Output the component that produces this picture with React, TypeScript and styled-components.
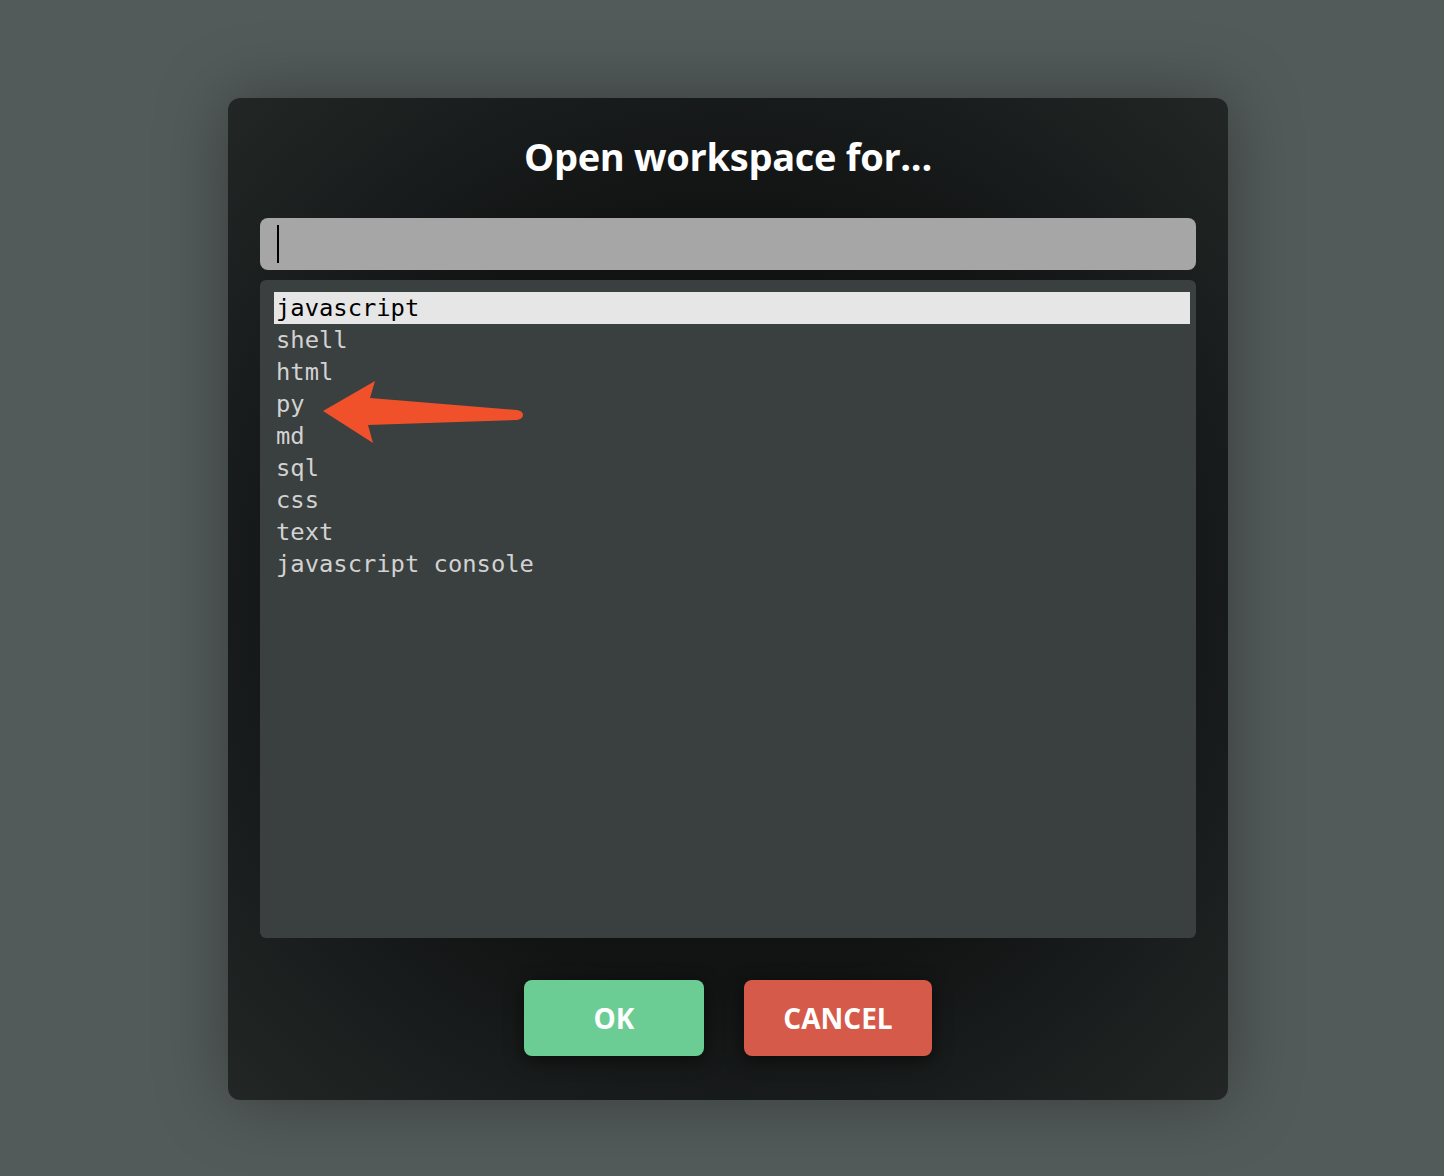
import React from 'react';
import styled, { createGlobalStyle } from 'styled-components';

const GlobalStyle = createGlobalStyle`
    html, body {
        margin: 0;
        padding: 0;
        background: #535b5a;
    }
`;

const Page = styled.div`
    min-height: 1176px;
    box-sizing: border-box;
    padding: 98px 0 0 228px;
    background: #535b5a;
`;

const Dialog = styled.div`
    width: 1000px;
    height: 1002px;
    box-sizing: border-box;
    padding: 32px;
    border-radius: 12px;
    display: flex;
    flex-direction: column;
    background: radial-gradient(ellipse at 50% 50%, #0d0e0e 0%, #121414 55%, #222726 100%);
    box-shadow: 0 0 70px rgba(0, 0, 0, 0.35);
`;

const Title = styled.h1`
    margin: 0 0 32px;
    height: 56px;
    line-height: 52px;
    text-align: center;
    color: #ffffff;
    font-family: 'Open Sans', sans-serif;
    font-weight: 700;
    font-size: 38px;
    letter-spacing: -0.3px;
`;

const SearchBox = styled.div`
    height: 52px;
    border-radius: 8px;
    background: #a6a6a6;
    display: flex;
    align-items: center;
    padding-left: 17px;
    margin-bottom: 10px;
`;

const Caret = styled.span`
    width: 2px;
    height: 38px;
    background: #000;
`;

const List = styled.div`
    position: relative;
    height: 658px;
    box-sizing: border-box;
    padding: 12px 6px 12px 14px;
    border-radius: 6px;
    background: #3a3f3f;
`;

const Item = styled.div<{ $selected?: boolean }>`
    height: 32px;
    line-height: 33px;
    padding-left: 2px;
    font-family: 'DejaVu Sans Mono', monospace;
    font-size: 23.8px;
    color: ${p => (p.$selected ? '#000' : '#d2d2d2')};
    background: ${p => (p.$selected ? '#e6e6e6' : 'transparent')};
    white-space: pre;
    overflow: hidden;
`;

const Arrow = styled.svg`
    position: absolute;
    left: 0;
    top: 0;
    width: 300px;
    height: 200px;
    pointer-events: none;
`;

const Buttons = styled.div`
    display: flex;
    justify-content: center;
    gap: 40px;
    margin-top: 42px;
`;

const Btn = styled.button<{ $color: string; $width: number }>`
    width: ${p => p.$width}px;
    height: 76px;
    border: none;
    border-radius: 8px;
    background: ${p => p.$color};
    color: #fff;
    font-family: 'Open Sans', sans-serif;
    font-weight: 700;
    font-size: 28px;
    cursor: pointer;
    box-shadow: 0 4px 18px rgba(0, 0, 0, 0.55);
`;

const modes = ['javascript', 'shell', 'html', 'py', 'md', 'sql', 'css', 'text', 'javascript console'];

export default function App() {
    return (
        <>
            <GlobalStyle />
            <Page>
                <Dialog>
                    <Title>Open workspace for...</Title>
                    <SearchBox>
                        <Caret />
                    </SearchBox>
                    <List>
                        {modes.map((m, i) => (
                            <Item key={m} $selected={i === 0}>
                                {m}
                            </Item>
                        ))}
                        <Arrow viewBox="0 0 300 200">
                            <path
                                d="M63 131 L115 101 L110 118 L257 130 Q263 131 263 135 Q263 139 257 140 L108 145 L113 163 Z"
                                fill="#f0512a"
                            />
                        </Arrow>
                    </List>
                    <Buttons>
                        <Btn $color="#6ccd94" $width={180}>OK</Btn>
                        <Btn $color="#d65a49" $width={188}>CANCEL</Btn>
                    </Buttons>
                </Dialog>
            </Page>
        </>
    );
}
